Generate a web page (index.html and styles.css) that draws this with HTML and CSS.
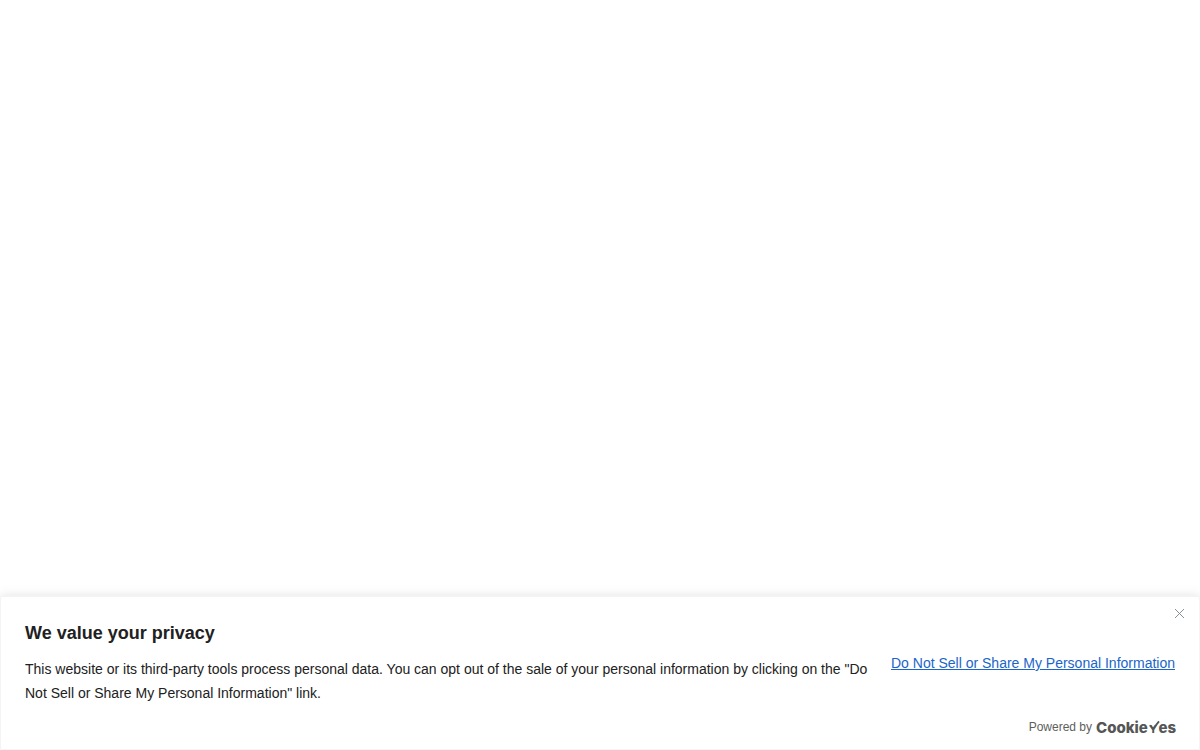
FILE: index.html
```html
<!DOCTYPE html>
<html lang="en">
<head>
    <meta charset="utf-8">
    <title>We value your privacy</title>
    <link rel="stylesheet" href="styles.css">
</head>
<body>
    <section class="consent-bar" aria-labelledby="consentTitle">
        <button type="button" class="btn-close" aria-label="Close">
            <svg width="11" height="11" viewBox="0 0 11 11">
                <path d="M1 1 L10 10 M10 1 L1 10" fill="none" stroke="#7b848b" stroke-width="0.9"/>
            </svg>
        </button>
        <div class="notice">
            <div class="notice-text">
                <h2 id="consentTitle">We value your privacy</h2>
                <p>This website or its third-party tools process personal data. You can opt out of the sale of your personal information by clicking on the "Do Not Sell or Share My Personal Information" link.</p>
            </div>
            <a href="#" class="do-not-sell">Do Not Sell or Share My Personal Information</a>
        </div>
        <div class="powered-by">
            <span>Powered by</span>
            <a href="#" class="brand" aria-label="CookieYes">
                <svg width="78" height="16" viewBox="0 0 78 16">
                    <text x="-1" y="14" class="brand-text">Cookie</text>
                    <text x="52" y="14" class="brand-y">Y</text>
                    <path d="M53 6.4 L56 9.8 L62 2.4" fill="none" stroke="#565656" stroke-width="1.8"/>
                    <text x="79" y="14" class="brand-text" text-anchor="end">es</text>
                </svg>
            </a>
        </div>
    </section>

    <script>
        document.querySelector('.btn-close').addEventListener('click', function() {
            document.querySelector('.consent-bar').style.display = 'none';
        });
    </script>
</body>
</html>
```

FILE: styles.css
```css
body {
    margin: 0;
    min-height: 100vh;
    display: flex;
    flex-direction: column;
    justify-content: flex-end;
    font-family: "Liberation Sans", Arial, sans-serif;
    color: #212121;
    background: #fff;
}
.consent-bar {
    position: relative;
    background: #fff;
    border: 1px solid #f4f4f4;
    border-radius: 2px;
    box-shadow: 0 -1px 10px 0 rgba(172, 171, 171, 0.3);
}
.btn-close {
    position: absolute;
    top: 11px;
    right: 14px;
    display: flex;
    padding: 0;
    border: none;
    background: none;
    cursor: pointer;
}
.notice {
    display: flex;
    align-items: center;
    gap: 20px;
    padding: 24px 24px 10px;
}
.notice-text {
    flex: 1;
}
h2 {
    margin: 0 0 12px;
    font-size: 18px;
    line-height: 24px;
}
p {
    margin: 0;
    font-size: 14px;
    line-height: 24px;
}
.do-not-sell {
    font-size: 14px;
    line-height: 24px;
    color: #1a65c9;
    white-space: nowrap;
}
.powered-by {
    display: flex;
    align-items: center;
    justify-content: flex-end;
    gap: 5px;
    padding: 4px 24px 14px;
    font-size: 12px;
    line-height: 16px;
    color: #5e5e5e;
}
.brand {
    display: flex;
}
.brand svg {
    overflow: visible;
}
.brand-text {
    font-family: Inter, sans-serif;
    font-size: 15px;
    font-weight: 800;
    fill: #565656;
}
.brand-y {
    font-family: Inter, sans-serif;
    font-size: 11px;
    font-weight: 800;
    fill: #565656;
}
```
